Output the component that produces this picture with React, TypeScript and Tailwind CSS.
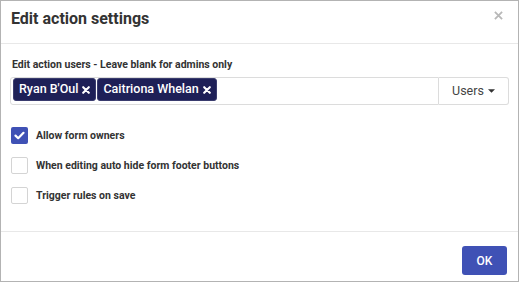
import React from "react";

function Pill({ name }: { name: string }) {
  return (
    <div className="flex items-center h-[23px] pl-[5px] pr-[5px] gap-[4px] rounded-[3px] bg-[#1e2057] border border-[#3a3c6e] text-white text-[12.5px] font-medium leading-none">
      <span>{name}</span>
      <svg width="8" height="8" viewBox="0 0 10 10" className="mt-[1px]">
        <path d="M1.5 1.5 L8.5 8.5 M8.5 1.5 L1.5 8.5" stroke="white" strokeWidth="2.6" strokeLinecap="round" />
      </svg>
    </div>
  );
}

function Check({ checked, label }: { checked?: boolean; label: string }) {
  return (
    <div className="flex items-center h-[17px] gap-[8px]">
      {checked ? (
        <div className="w-[17px] h-[17px] rounded-[2px] bg-[#3f51b5] flex items-center justify-center">
          <svg width="11" height="9" viewBox="0 0 11 9">
            <path d="M1.5 4.6 L4.2 7.2 L9.5 1.8" stroke="white" strokeWidth="2.2" fill="none" strokeLinecap="round" strokeLinejoin="round" />
          </svg>
        </div>
      ) : (
        <div className="w-[17px] h-[17px] rounded-[2px] border border-[#d4d4d4] bg-white" />
      )}
      <span className="text-[10.5px] font-bold text-[#333]">{label}</span>
    </div>
  );
}

export default function App() {
  return (
    <div
      className="w-[519px] h-[282px] box-border border border-[#b3b3b3] bg-white flex flex-col"
      style={{ fontFamily: "Roboto, 'Liberation Sans', sans-serif" }}
    >
      <div className="h-[43px] box-border border-b border-[#e8e8e8] flex items-start justify-between pl-[10px] pr-[15px] pt-[6px]">
        <div className="text-[16px] leading-[24px] font-bold text-[#333]">Edit action settings</div>
        <svg width="9" height="9" viewBox="0 0 10 10" className="mt-[4px]">
          <path d="M1 1 L9 9 M9 1 L1 9" stroke="#b8b8b8" strokeWidth="2" />
        </svg>
      </div>
      <div className="flex-1 px-[9px] pt-[13px]">
        <div className="text-[10.5px] leading-[16px] font-bold text-[#333] pl-[2px]">
          Edit action users - Leave blank for admins only
        </div>
        <div className="mt-[4px] flex h-[28px]">
          <div className="flex-1 box-border border border-[#dcdcdc] rounded-l-[3px] flex items-start gap-[1px] pl-[2px] pt-0">
            <Pill name="Ryan B'Oul" />
            <Pill name="Caitriona Whelan" />
          </div>
          <div className="w-[70px] box-border border border-l-0 border-[#dcdcdc] rounded-r-[3px] flex items-center justify-center gap-[4px] text-[12.5px] text-[#444]">
            <span>Users</span>
            <svg width="7" height="4" viewBox="0 0 8 4">
              <path d="M0 0 L8 0 L4 4 Z" fill="#333" />
            </svg>
          </div>
        </div>
        <div className="mt-[22px] flex flex-col gap-[13px] pl-[1px]">
          <Check checked label="Allow form owners" />
          <Check label="When editing auto hide form footer buttons" />
          <Check label="Trigger rules on save" />
        </div>
      </div>
      <div className="h-[50px] box-border border-t border-[#e8e8e8] flex items-start justify-end pr-[11px] pt-[14px]">
        <div className="w-[45px] h-[29px] rounded-[3px] bg-[#3f51b5] text-white text-[12px] font-medium flex items-center justify-center">
          OK
        </div>
      </div>
    </div>
  );
}
